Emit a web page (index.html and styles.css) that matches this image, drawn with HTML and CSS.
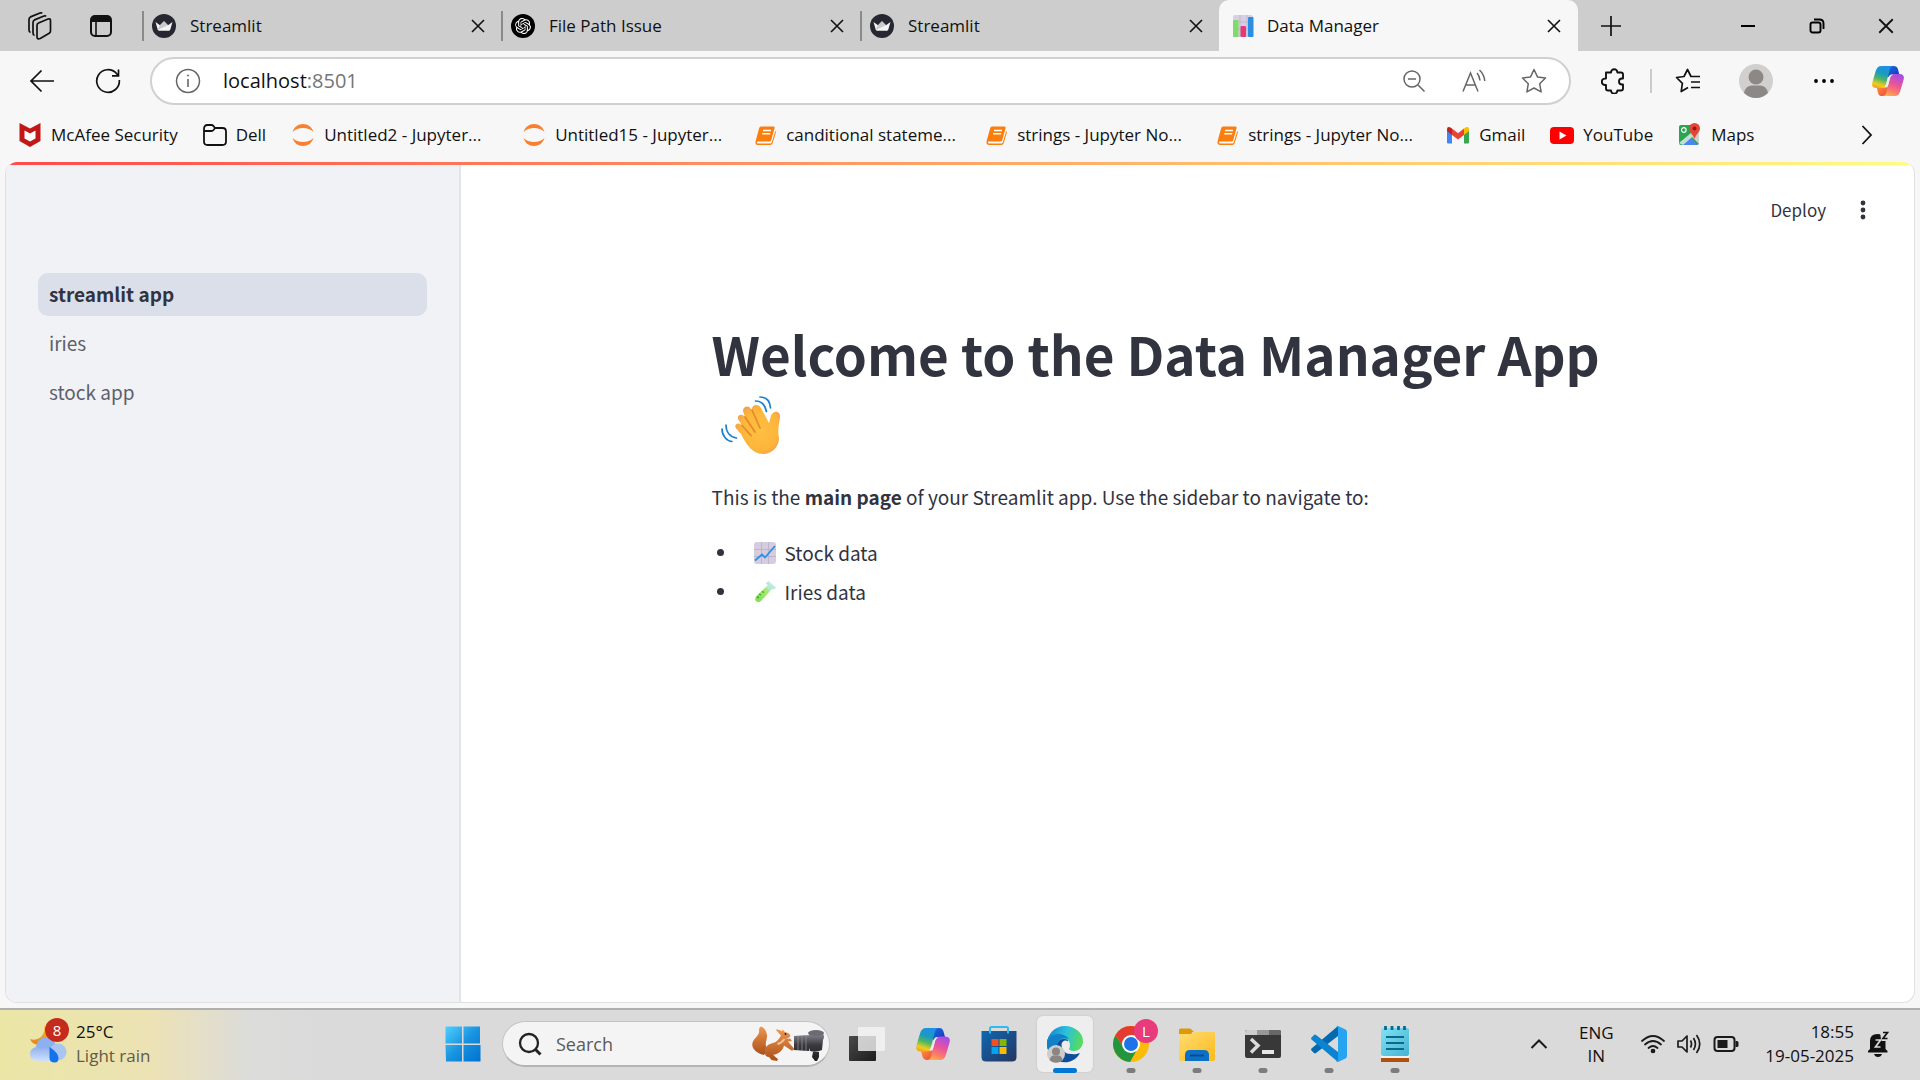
FILE: index.html
```html
<!DOCTYPE html>
<html lang="en">
<head>
<meta charset="utf-8">
<title>Data Manager</title>
<link rel="stylesheet" href="styles.css">
</head>
<body>
<svg class="defs" aria-hidden="true">
  <defs>
    <linearGradient id="cpA" x1="0.6" y1="0" x2="0.3" y2="1"><stop offset="0" stop-color="#1f8fe8"/><stop offset=".35" stop-color="#1a9bc0"/><stop offset=".6" stop-color="#4fb563"/><stop offset=".85" stop-color="#e9cf1f"/><stop offset="1" stop-color="#f7a51d"/></linearGradient>
    <linearGradient id="cpB" x1="0.7" y1="0" x2="0.3" y2="1"><stop offset="0" stop-color="#a74be8"/><stop offset=".45" stop-color="#e8559b"/><stop offset=".75" stop-color="#fb7a6a"/><stop offset="1" stop-color="#ffb04a"/></linearGradient>
    <linearGradient id="cpC" x1="0" y1="0" x2="1" y2="1"><stop offset="0" stop-color="#1a6fe6"/><stop offset="1" stop-color="#1636b8"/></linearGradient>
    <linearGradient id="cpD" x1="0" y1="0" x2="1" y2="1"><stop offset="0" stop-color="#ff9a3c"/><stop offset="1" stop-color="#e8403e"/></linearGradient>
    <linearGradient id="win" x1="0" y1="0" x2="1" y2="1"><stop offset="0" stop-color="#4fd0ff"/><stop offset=".5" stop-color="#1893e0"/><stop offset="1" stop-color="#0072d0"/></linearGradient>
    <linearGradient id="cloud" x1="0" y1="0" x2="0" y2="1"><stop offset="0" stop-color="#8fb2f0"/><stop offset="1" stop-color="#cfe0fb"/></linearGradient>
    <linearGradient id="moon" x1="0" y1="0" x2="0" y2="1"><stop offset="0" stop-color="#f7c42a"/><stop offset="1" stop-color="#ea7f1c"/></linearGradient>
    <linearGradient id="fur" x1="0" y1="0" x2="0" y2="1"><stop offset="0" stop-color="#f0964c"/><stop offset="1" stop-color="#a9501b"/></linearGradient>
    <linearGradient id="metal" x1="0" y1="0" x2="0" y2="1"><stop offset="0" stop-color="#85858e"/><stop offset=".4" stop-color="#3a3a40"/><stop offset="1" stop-color="#1d1d20"/></linearGradient>
    <linearGradient id="store" x1="0" y1="0" x2="1" y2="1"><stop offset="0" stop-color="#0e68b4"/><stop offset="1" stop-color="#27355e"/></linearGradient>
    <linearGradient id="edgeTop" x1="0" y1=".3" x2="1" y2=".5"><stop offset="0" stop-color="#1583d0"/><stop offset=".5" stop-color="#2cc0dc"/><stop offset="1" stop-color="#57dd58"/></linearGradient>
    <linearGradient id="folder" x1="0" y1="0" x2="1" y2="1"><stop offset="0" stop-color="#ffdc73"/><stop offset="1" stop-color="#fbbb1c"/></linearGradient>
    <linearGradient id="note" x1="0" y1="0" x2="1" y2="1"><stop offset="0" stop-color="#82e2f2"/><stop offset="1" stop-color="#45b3d3"/></linearGradient>
    <linearGradient id="dark" x1="0" y1="0" x2="1" y2="1"><stop offset="0" stop-color="#4a4a4a"/><stop offset="1" stop-color="#1c1c1c"/></linearGradient>
    <radialGradient id="hand" cx=".55" cy=".5" r=".6"><stop offset="0" stop-color="#ffc042"/><stop offset=".7" stop-color="#fdb53a"/><stop offset="1" stop-color="#f4975a"/></radialGradient>
    <linearGradient id="bulb" x1="1" y1="0" x2="0" y2="1"><stop offset="0" stop-color="#cfeaff"/><stop offset=".35" stop-color="#b6e8cf"/><stop offset=".45" stop-color="#a6ea70"/><stop offset="1" stop-color="#7ddc55"/></linearGradient>
  </defs>
  <symbol id="i-close" viewBox="0 0 16 16"><path d="M2 2l12 12M14 2L2 14" fill="none" stroke="#111" stroke-width="1.6"/></symbol>
  <symbol id="i-crown" viewBox="0 0 24 24"><circle cx="12" cy="12" r="12" fill="#262730"/><path d="M3.500 8l4.500 3.200L12 7.300l4 3.900L20.500 8l-2.200 7.600q-.4 1.200-1.600 1.200H7.300q-1.200 0-1.600-1.200z" fill="#f4f4f4"/><path d="M12 7.300l4 3.900-10.500 4.800L8 11.200z" fill="#c9c9cb"/></symbol>
  <symbol id="i-jupyter" viewBox="0 0 24 24"><path d="M1.500 9C3 4 7 1 12 1s9 3 10.500 8C20 6.200 16 5 12 5S4 6.200 1.500 9zM1.500 15C3 20 7 23 12 23s9-3 10.500-8C20 17.800 16 19 12 19s-8-1.200-10.500-4z" fill="#f98030"/></symbol>
  <symbol id="i-book" viewBox="0 0 24 24"><path d="M8 3.500h12.500q1.500 0 1.100 1.500l-3.300 12q-.4 1.500-2 1.500H4.200q-1 1.800.6 1.900h12.600q1 0 1.400-1.200L22.300 8q.9.700.5 1.700l-3.200 10.600q-.6 1.700-2.300 1.700H5.500q-3.700 0-2.900-3.800L6.200 5q.4-1.500 1.800-1.500z" fill="#fb7d0b"/><path d="M10 7.500h8M9.200 10.700h8" stroke="#fff" stroke-width="1.500"/></symbol>
  <symbol id="i-copilot" viewBox="0 0 36 36"><path d="M17 2h7q3.500 0 4.500 3.400L30 11h-7.500q-3 0-4 3L15 10z" fill="url(#cpC)"/><path d="M19 34h-7q-3.500 0-4.500-3.400L6 25h7.500q3 0 4-3L21 26z" fill="url(#cpD)"/><path d="M11 2h13q-3 0-4 3.500L15.700 22q-.9 3.500-4.500 3.500H6q-6 0-4.600-6L5 7.500Q6.500 2 11 2z" fill="url(#cpA)"/><path d="M25 34H12q3 0 4-3.500L20.300 14q.9-3.500 4.500-3.500H30q6 0 4.600 6L31 28.500q-1.500 5.500-6 5.500z" fill="url(#cpB)"/><path d="M20.500 11.500h3q-2.400.8-3.200 3L17.500 24.500h-3q.8-.8 1.200-2.500z" fill="#ececec"/></symbol>
</svg>

<div class="browser">
  <div class="tabstrip">
    <div class="tab-tools">
      <button class="tool" aria-label="Workspaces"><svg width="26" height="28" viewBox="0 0 26 28" fill="none" stroke="#111" stroke-width="1.700" stroke-linejoin="round"><path d="M11 13.500q0-1.800 1.500-2.500L22 7q2.500-.8 2.500 1.500v10.500q0 1.500-1.300 2.200l-9 5.300Q11 27.500 11 25zM8.500 23.500Q7 23 7 21V10.500q0-1.800 1.500-2.600L18 4q1.500-.5 2 .5M4.500 20.500Q3 20 3 18V7.500q0-1.800 1.500-2.600L14 1q1.500-.5 2 .5"/></svg></button>
      <button class="tool" aria-label="Tab actions"><svg width="24" height="24" viewBox="0 0 24 24"><rect x="2" y="2" width="20" height="20" rx="4" fill="none" stroke="#111" stroke-width="2"/><path d="M2 8V5q0-3 3-3h14q3 0 3 3v3z" fill="#111"/><path d="M7 8v14" stroke="#111" stroke-width="1.600"/></svg></button>
    </div>
    <div class="tab"><svg class="fav"><use href="#i-crown"/></svg><button class="tab-title">Streamlit</button><button class="x" aria-label="Close tab"><svg><use href="#i-close"/></svg></button></div>
    <div class="tab"><svg class="fav" viewBox="0 0 24 24"><circle cx="12" cy="12" r="12" fill="#000"/><path transform="translate(4 4) scale(.667)" fill="#fff" d="M22.282 9.821a5.985 5.985 0 0 0-.516-4.910 6.046 6.046 0 0 0-6.510-2.900A6.065 6.065 0 0 0 4.981 4.182a5.985 5.985 0 0 0-3.998 2.900 6.046 6.046 0 0 0 .743 7.097 5.980 5.980 0 0 0 .510 4.911 6.051 6.051 0 0 0 6.515 2.900A5.985 5.985 0 0 0 13.260 24a6.056 6.056 0 0 0 5.772-4.206 5.990 5.990 0 0 0 3.998-2.900 6.056 6.056 0 0 0-.748-7.073zM13.260 22.430a4.476 4.476 0 0 1-2.876-1.041l.142-.080 4.778-2.758a.795.795 0 0 0 .393-.681v-6.737l2.020 1.169a.071.071 0 0 1 .038.052v5.583a4.504 4.504 0 0 1-4.495 4.493zM3.600 18.304a4.471 4.471 0 0 1-.535-3.014l.142.085 4.783 2.758a.771.771 0 0 0 .781 0l5.843-3.368v2.332a.080.080 0 0 1-.033.062L9.740 19.950a4.499 4.499 0 0 1-6.140-1.646zM2.341 7.896a4.485 4.485 0 0 1 2.365-1.973V11.600a.766.766 0 0 0 .388.677l5.815 3.355-2.021 1.168a.076.076 0 0 1-.071 0l-4.830-2.786A4.504 4.504 0 0 1 2.341 7.872zm16.596 3.856l-5.833-3.388L15.119 7.200a.076.076 0 0 1 .071 0l4.830 2.791a4.494 4.494 0 0 1-.676 8.104v-5.677a.790.790 0 0 0-.407-.667zm2.011-3.023l-.142-.085-4.774-2.782a.776.776 0 0 0-.785 0L9.409 9.230V6.897a.066.066 0 0 1 .028-.061l4.830-2.787a4.499 4.499 0 0 1 6.680 4.660zM8.307 12.863l-2.020-1.164a.080.080 0 0 1-.038-.057V6.075a4.499 4.499 0 0 1 7.376-3.454l-.142.081L8.704 5.460a.795.795 0 0 0-.393.682zm1.097-2.366l2.602-1.500 2.607 1.500v3l-2.597 1.500-2.607-1.500z"/></svg><button class="tab-title">File Path Issue</button><button class="x" aria-label="Close tab"><svg><use href="#i-close"/></svg></button></div>
    <div class="tab"><svg class="fav"><use href="#i-crown"/></svg><button class="tab-title">Streamlit</button><button class="x" aria-label="Close tab"><svg><use href="#i-close"/></svg></button></div>
    <div class="tab active"><svg class="fav" viewBox="0 0 24 24"><rect x="2" y="1" width="20" height="22" rx="2" fill="#d8d0e2"/><path d="M2 8h20M2 15h20M9 1v22M16 1v22" stroke="#bdb4cb" stroke-width=".8"/><rect x="2" y="6" width="5.500" height="17" rx="1" fill="#7fdc6a"/><rect x="9.500" y="12" width="5.500" height="11" rx="1" fill="#e43a78"/><rect x="17" y="3" width="5.500" height="20" rx="1" fill="#2b8ee0"/></svg><button class="tab-title">Data Manager</button><button class="x" aria-label="Close tab"><svg><use href="#i-close"/></svg></button></div>
    <button class="newtab" aria-label="New tab"><svg width="22" height="22" viewBox="0 0 22 22"><path d="M11 1v20M1 11h20" stroke="#111" stroke-width="1.700"/></svg></button>
    <div class="winctl">
      <button aria-label="Minimize"><svg width="16" height="16" viewBox="0 0 16 16"><path d="M1 8h14" stroke="#000" stroke-width="2"/></svg></button>
      <button aria-label="Restore"><svg width="16" height="16" viewBox="0 0 16 16" fill="none" stroke="#000" stroke-width="1.900"><rect x="1.500" y="4.500" width="10" height="10" rx="2"/><path d="M5 1.500h5.500q4 0 4 4V11"/></svg></button>
      <button aria-label="Close window"><svg width="18" height="18"><use href="#i-close"/></svg></button>
    </div>
  </div>

  <div class="toolbar">
    <div class="nav-btns">
      <button aria-label="Back"><svg width="26" height="24" viewBox="0 0 26 24" fill="none" stroke="#111" stroke-width="1.700"><path d="M25 12H2M12.500 1.500L2 12l10.500 10.500"/></svg></button>
      <button aria-label="Refresh"><svg width="26" height="26" viewBox="0 0 26 26" fill="none" stroke="#111" stroke-width="1.700"><path d="M24.300 12A11.300 11.300 0 1 1 21.500 5.500L23 7.500M23.500 1.500v6.300H17"/></svg></button>
    </div>
    <form class="address">
      <button type="button" class="info" aria-label="Site information"><svg width="26" height="26" viewBox="0 0 26 26" fill="none" stroke="#666" stroke-width="1.500"><circle cx="13" cy="13" r="11.500"/><path d="M13 11v8" stroke-width="1.600"/><circle cx="13" cy="7.500" r=".7" fill="#666" stroke-width=".7"/></svg></button>
      <input class="url" type="text" value="localhost" aria-label="Address"><span class="port">:8501</span>
      <div class="address-actions">
        <button type="button" aria-label="Zoom"><svg width="24" height="24" viewBox="0 0 24 24" fill="none" stroke="#666" stroke-width="1.500"><circle cx="10" cy="10" r="8"/><path d="M6 10h8M16 16l6.500 6.500"/></svg></button>
        <button type="button" aria-label="Read aloud"><svg width="26" height="26" viewBox="0 0 26 26" fill="none" stroke="#666" stroke-width="1.500"><path d="M2 23.500L9.500 5l7.500 18.500M4.700 17h9.600M16 5q2.500 2.600 3 7.500M18.500 2q4.500 4.300 5.300 11"/></svg></button>
        <button type="button" aria-label="Add to favorites"><svg width="26" height="26" viewBox="0 0 26 26" fill="none" stroke="#666" stroke-width="1.500" stroke-linejoin="round"><path d="M13 1.500l3.500 7.400 8 1.100-5.800 5.700 1.400 8.200L13 20l-7.100 3.900 1.400-8.200L1.500 10l8-1.100z"/></svg></button>
      </div>
    </form>
    <div class="tb-actions">
      <button aria-label="Extensions"><svg width="26" height="26" viewBox="0 0 26 26" fill="none" stroke="#111" stroke-width="1.900" stroke-linejoin="round"><path d="M5 4.500h5a3.200 3.200 0 0 1 6.400 0H20q2 0 2 2v4h-1a3 3 0 0 0 0 6h1v4q0 2-2 2h-3.600a3.200 3.200 0 0 1-6.400 0H7q-2 0-2-2V17H4a3.200 3.200 0 0 1 0-6.400h1z"/></svg></button>
      <span class="sep"></span>
      <button aria-label="Favorites"><svg width="26" height="26" viewBox="0 0 26 26" fill="none" stroke="#111" stroke-width="1.700" stroke-linejoin="round"><path d="M13 19.500l-6.800 4 1.200-8.200L1.500 9.500l7.500-1 3.500-7 3.500 7H25M16 14h9M16 19.500h9"/></svg></button>
      <button aria-label="Profile"><svg width="34" height="34" viewBox="0 0 34 34"><circle cx="17" cy="17" r="17" fill="#d2d0ce"/><circle cx="17" cy="13" r="7.500" fill="#8c8886"/><path d="M5 29q1.500-7.500 8-7.500h8q6.500 0 8 7.500a17 17 0 0 1-24 0z" fill="#8c8886"/></svg></button>
      <button aria-label="More"><svg width="22" height="6" viewBox="0 0 22 6"><circle cx="3" cy="3" r="1.900"/><circle cx="11" cy="3" r="1.900"/><circle cx="19" cy="3" r="1.900"/></svg></button>
      <button aria-label="Copilot"><svg width="34" height="34"><use href="#i-copilot"/></svg></button>
    </div>
  </div>

  <nav class="bookmarks" aria-label="Favorites bar">
    <a href="#"><svg viewBox="0 0 24 24"><path d="M1.500 0L12 5.500 22.500 0v18L12 24 1.500 18z" fill="#c01818"/><path d="M6.500 7.500L12 10.500l5.500-3v8L12 18.500l-5.500-3z" fill="#fff"/></svg>McAfee Security</a>
    <a href="#"><svg viewBox="0 0 24 24" fill="none" stroke="#111" stroke-width="1.800"><path d="M1 6q0-4 3.500-4h4q1 0 2 1l1.500 2h7.500q3.500 0 3.500 3.500v10q0 3.500-3.500 3.500h-15Q1 22 1 18.500zM1.500 8h7q1.200 0 2-1L12 5"/></svg>Dell</a>
    <a href="#" class="long"><svg><use href="#i-jupyter"/></svg>Untitled2 - Jupyter...</a>
    <a href="#" class="long"><svg><use href="#i-jupyter"/></svg>Untitled15 - Jupyter...</a>
    <a href="#" class="long"><svg><use href="#i-book"/></svg>canditional stateme...</a>
    <a href="#" class="long"><svg><use href="#i-book"/></svg>strings - Jupyter No...</a>
    <a href="#" class="long"><svg><use href="#i-book"/></svg>strings - Jupyter No...</a>
    <a href="#"><svg viewBox="0 0 24 24"><path d="M1 6v13.500q0 1 1 1h4V9z" fill="#4285f4"/><path d="M23 6v13.500q0 1-1 1h-4V9z" fill="#34a853"/><path d="M18 5.500l2-1.300q3-1 3 2V8l-5 4z" fill="#fbbc04"/><path d="M6 5.500L4 4.200q-3-1-3 2V8l5 4z" fill="#c5221f"/><path d="M6 5.500l6 4.700 6-4.700V12l-6 4.500L6 12z" fill="#ea4335"/></svg>Gmail</a>
    <a href="#"><svg viewBox="0 0 24 24"><rect y="4" width="24" height="17" rx="4" fill="#f00"/><path d="M9.500 8.500v8l7-4z" fill="#fff"/></svg>YouTube</a>
    <a href="#"><svg viewBox="0 0 24 24"><rect x="1" y="2" width="20" height="20" rx="2" fill="#2aa551"/><path d="M4 22l8-8 8 8z" fill="#4a86f0"/><path d="M1 20L19 5l2 3L5 22z" fill="#f5f5f5" opacity=".75"/><path d="M12 12l9 9V8z" fill="#cfcfcf"/><circle cx="5.800" cy="7" r="2.300" fill="none" stroke="#fff" stroke-width="1.200"/><path d="M16.500 0a5.500 5.500 0 0 1 5.500 5.500c0 3.500-4 5.500-5.500 10.500C15 11 11 9 11 5.500A5.500 5.500 0 0 1 16.500 0z" fill="#e94335"/><circle cx="16.500" cy="5.500" r="1.900" fill="#8a1c14"/></svg>Maps</a>
    <button class="more" aria-label="More favorites"><svg width="12" height="20" viewBox="0 0 12 20"><path d="M1.500 1L10 10l-8.500 9" fill="none" stroke="#111" stroke-width="1.800"/></svg></button>
  </nav>

  <div class="viewport">
    <div class="decoration"></div>
    <div class="app">
      <nav class="sidebar" aria-label="Pages">
        <a href="#" class="current">streamlit app</a>
        <a href="#">iries</a>
        <a href="#">stock app</a>
      </nav>
      <main>
        <header>
          <button class="deploy">Deploy</button>
          <button aria-label="Main menu"><svg width="6" height="20" viewBox="0 0 6 20" fill="#31333f"><circle cx="3" cy="3" r="2.400"/><circle cx="3" cy="10" r="2.400"/><circle cx="3" cy="17" r="2.400"/></svg></button>
        </header>
        <article>
          <h1>Welcome to the Data Manager App
            <svg class="wave" role="img" aria-label="waving hand" viewBox="0 0 76 60">
              <path d="M29 38C24 32 22 31 24 28.500c2-2 4-1 6 1L26 23c-1-4 4-6 7-2l-2-6c0-5 6-6 8-2l1 1c-1-5 6-7 9-2l8 15 2-7c2-6 9-5 9 0 0 6-3 12-1 22 0 9-7 16-16 16-11 0-17-10-22-20z" fill="url(#hand)"/>
              <path d="M30 29.500l9 10M33 21l10 15M40 14l8 18" stroke="#e58a2c" stroke-width="1.800" fill="none" stroke-linecap="round"/>
              <g fill="none" stroke="#1a82cf" stroke-width="1.700" stroke-linecap="round"><path d="M48 1c6 0 10 4 10.500 11M43.500 5c6 0 9.500 4 11 10.500M10 33c0 7 5 12 10 12.500M14 29c0 7 4 12 10.500 13"/></g>
            </svg>
          </h1>
          <p>This is the <strong>main page</strong> of your Streamlit app. Use the sidebar to navigate to:</p>
          <ul>
            <li><svg viewBox="0 0 22 22" aria-hidden="true"><rect width="22" height="22" rx="3" fill="#d5cce0"/><path d="M0 7.500h22M0 14.500h22M7.500 0v22M14.500 0v22" stroke="#b9aecb" stroke-width=".8"/><path d="M1 18.500l7-6 3 3L21 4" fill="none" stroke="#2f8fe0" stroke-width="1.800"/></svg>Stock data</li>
            <li><svg viewBox="0 0 22 22" aria-hidden="true"><path d="M11.500 2.500l3-2.500 7.500 6.500-1.500 2-2.500-.5L7 20q-2 2-4.500.500T2 15.500L14 4z" fill="url(#bulb)"/><path d="M5 13l2 1M8 10.500l2 1M3 16l2 .5" stroke="#3b9a40" stroke-width="1.300"/></svg>Iries data</li>
          </ul>
        </article>
      </main>
    </div>
  </div>
</div>

<footer class="taskbar">
  <button class="weather">
    <span class="weather-icon">
      <svg width="40" height="40" viewBox="0 0 40 40"><path d="M16 2c2 8-5 16-14 13 3 8 15 7 19-1 2-5 0-10-5-12z" fill="url(#moon)"/><circle cx="18" cy="23" r="10" fill="#8db0ee"/><circle cx="30" cy="28" r="8.500" fill="#a9c5f4"/><path d="M9 37q-7-1-7-7t7-7q3 0 5 2 4-3 8 0t4 7-3 5z" fill="url(#cloud)"/><path d="M21.500 23q9 6 9 11t-4.500 4.500-4.500-4.500z" fill="#1273ee"/></svg>
      <span class="badge">8</span>
    </span>
    <span class="weather-text"><span>25°C</span><span class="dim">Light rain</span></span>
  </button>
  <div class="dock">
    <button aria-label="Start"><svg width="36" height="36" viewBox="0 0 36 36"><path d="M1 .500h16v17H.500V1zM18.500.500H35V17.500H18.500zM.500 19H17v16.500H1zM18.500 19h17v16.500h-17z" fill="url(#win)"/></svg></button>
    <label class="search">
      <svg width="24" height="24" viewBox="0 0 24 24" fill="none" stroke="#222" stroke-width="2.300"><circle cx="11" cy="11" r="9"/><path d="M17.500 17.500l5 5" stroke-width="3"/></svg>
      <input type="text" placeholder="Search" aria-label="Search">
      <svg class="squirrel" width="74" height="36" viewBox="0 0 74 36"><path d="M13 29C3 27-1 20 2.500 14.500 5 11 9 8 8 4q0-3 2-3.500 5 2 6 8.500c.5 4-2 7-1 11 .6 3 1.500 5-2 9z" fill="url(#fur)"/><path d="M14 27c-1-6 3-9 8-10 4-1 6-4 8-7.500L24.500 3.500q4-.5 6.500 2l.5-2 2.500 2.500q5 1 5.500 4-1.500 2.500-5.500 3l5-.5 2 2.500-4 .5 6 7q0 2.500-2.500 2L33 19.500q-1 5-6.500 8-2.500 1.500-4.500 1l3 3 2 1.500-1 2-5.500-1-2.500-3q-4 0-4-4z" fill="url(#fur)"/><path d="M26.500 18q4-1 7-5" stroke="#f7c79a" stroke-width="2" fill="none"/><circle cx="34.500" cy="8" r="1" fill="#222"/><path d="M43 10l15-1v16l-15-1zM58 8h14q2 2 0 6l-1 10q-6 3-12 1l-1-3zM62 26h6v5l-2 4h-2l-3-4z" fill="url(#metal)"/><ellipse cx="65" cy="7" rx="8" ry="3" fill="#6b6b74"/><path d="M47 10v14M51 10v14M55 10v15" stroke="#8e8e96" stroke-width=".8"/></svg>
    </label>
    <button aria-label="Task view"><svg width="36" height="36" viewBox="0 0 36 36"><rect x="0" y="10" width="27" height="25" rx="1" fill="url(#dark)"/><rect x="9" y="1" width="27" height="24" rx="1" fill="#f4f4f4" opacity=".8"/></svg></button>
    <button aria-label="Copilot"><svg width="36" height="36"><use href="#i-copilot"/></svg></button>
    <button aria-label="Microsoft Store"><svg width="36" height="36" viewBox="0 0 36 36"><path d="M9 7V2.500Q9 1 10.500 1h15Q27 1 27 2.500V7" fill="none" stroke="#30b9f2" stroke-width="2"/><path d="M.500 5h35v26q0 4.500-4.500 4.500H5Q.500 35.500.500 31z" fill="url(#store)"/><path d="M9 5v2.500M27 5v2.500" stroke="#30b9f2" stroke-width="2"/><path d="M10.500 13h7v7h-7z" fill="#f25022"/><path d="M18.500 13h7v7h-7z" fill="#7fba00"/><path d="M10.500 21h7v7h-7z" fill="#00a4ef"/><path d="M18.500 21h7v7h-7z" fill="#ffb900"/></svg></button>
    <button class="app-btn selected" aria-label="Edge"><svg width="38" height="38" viewBox="0 0 38 38"><path d="M1 19Q1 8 11 9c9 0 14 6 9 11-3 6 4 12 14 8-5 9-14 11-22 8Q1 30 1 19z" fill="#0e4f9c"/><path d="M1 19C1 9 9 1 19 1s18 7 18 15c0 6-4 10-9 10-4 0-6-2-5-4 2-4 0-8-5-8-6 0-8 6-7 11-6-1-10 1-10-6z" fill="url(#edgeTop)"/><path d="M1 19q2-10 11-10 7 0 11 5-9-3-12 5-2 6 1 12-11-1-11-12z" fill="#1180c6"/><path d="M15.500 19q1-3.500 4-3.500t4 3.500-.5 5 4.500 3.200q-3 2.500-7 1-5-2.200-5-9.200z" fill="#ededed"/><circle cx="10" cy="29" r="9" fill="#cfcdcb"/><circle cx="10" cy="26.500" r="4" fill="#8a8684"/><path d="M3.500 35q1-4.500 4-4.500h5q3 0 4 4.500a9 9 0 0 1-13 0z" fill="#8a8684"/></svg></button>
    <button class="app-btn running" aria-label="Chrome"><svg width="38" height="38" viewBox="0 0 38 38"><circle cx="19" cy="19" r="18" fill="#fbbc09"/><path d="M3.400 10A18 18 0 0 0 18 37l8-14-7-4-7 4z" fill="#24953f"/><path d="M3.400 10A18 18 0 0 1 34.600 10H19l-7 13z" fill="#e53a30"/><circle cx="19" cy="19" r="9" fill="#fff"/><circle cx="19" cy="19" r="7" fill="#1f73e8"/></svg><span class="badge chrome-badge">L</span></button>
    <button class="app-btn running" aria-label="File Explorer"><svg width="38" height="38" viewBox="0 0 38 38"><path d="M1 12V5q0-1.500 1.500-1.500h9q1 0 2 1L16 7h-2l-1 5z" fill="#dc9a05"/><path d="M1 9h12l3-2h19.500q1.500 0 1.500 1.500V34q0 2-2 2H3q-2 0-2-2z" fill="url(#folder)"/><path d="M7 36v-6q0-5 5-5h14q5 0 5 5v6z" fill="#0c71c6"/><path d="M12 30.500h14" stroke="#064a8c" stroke-width="1.800"/></svg></button>
    <button class="app-btn running" aria-label="Terminal"><svg width="38" height="38" viewBox="0 0 38 38"><rect x="1" y="5" width="36" height="28" rx="2" fill="#383838"/><path d="M1 10V7q0-2 2-2h10v5z" fill="#ccc"/><path d="M13 5h12v5H13z" fill="#989898"/><path d="M25 5h10q2 0 2 2v3H25z" fill="#686868"/><path d="M7 14l7 6.500-7 7" fill="none" stroke="#dcdcdc" stroke-width="3.500"/><path d="M18 25h12v4H18z" fill="#e6e6e6"/></svg></button>
    <button class="app-btn running" aria-label="Visual Studio Code"><svg width="38" height="38" viewBox="0 0 38 38"><path d="M28 1v10L6 28q-1 .8-2 0l-2.500-2.500q-1-1 0-2z" fill="#0569b0"/><path d="M28 37V27L6 10q-1-.8-2 0l-2.500 2.500q-1 1 0 2z" fill="#0a84d0"/><path d="M28 1l7.500 3.500Q37 5.300 37 7v24q0 1.700-1.500 2.500L28 37q-1 .3-2-.8 2 .3 2-1.700v-31Q28 1.500 26 1.800q1-1.100 2-.8z" fill="#26a4f2"/></svg></button>
    <button class="app-btn running" aria-label="Notepad"><svg width="38" height="38" viewBox="0 0 38 38"><path d="M5 30h28v7H5z" fill="#b0500e"/><path d="M5 28h28v5H5z" fill="#f2f2f2"/><rect x="5" y="3" width="28" height="28" rx="2" fill="url(#note)"/><path d="M10 12h18M10 18h18M10 24h18" stroke="#0a6a8e" stroke-width="1.900"/><path d="M9.500 1v4M16 1v4M22.500 1v4M28.500 1v4" stroke="#0a6a8e" stroke-width="2.800"/></svg></button>
  </div>
  <div class="tray">
    <button aria-label="Hidden icons"><svg width="18" height="10" viewBox="0 0 18 10"><path d="M1.500 9L9 1.500 16.500 9" fill="none" stroke="#1a1a1a" stroke-width="2"/></svg></button>
    <button class="lang"><span>ENG</span><span>IN</span></button>
    <button class="status" aria-label="Network, sound and battery">
      <svg width="24" height="24" viewBox="0 0 24 24" fill="none" stroke="#1a1a1a" stroke-width="1.700" stroke-linecap="round"><path d="M1 9q11-10 22 0M4 12.500q8-7 16 0M7.500 16q4.500-4 9 0"/><circle cx="12" cy="19" r="1.500" fill="#1a1a1a"/></svg>
      <svg width="26" height="24" viewBox="0 0 26 24" fill="none" stroke="#1a1a1a" stroke-width="1.700" stroke-linejoin="round"><path d="M2 9h4l5-5v16l-5-5H2zM14.500 8.500q2 3.500 0 7M17.500 6q3.800 6 0 12M20.500 3q6.500 9 0 18"/></svg>
      <svg width="26" height="24" viewBox="0 0 26 24"><rect x="1.500" y="5" width="20" height="14" rx="3" fill="none" stroke="#1a1a1a" stroke-width="2"/><rect x="4.500" y="8" width="10" height="8" fill="#1a1a1a"/><path d="M22.500 9h1.500q1.500 0 1.500 1.500v3q0 1.500-1.500 1.500h-1.500z" fill="#1a1a1a"/></svg>
    </button>
    <button class="clock"><span>18:55</span><span>19-05-2025</span></button>
    <button aria-label="Notifications"><svg width="22" height="26" viewBox="0 0 22 26"><path d="M3 18v-8q0-7 7.500-7 2.500 0 4 1v6h4v8l2 2v1.500H1V20zM7 23h8q-1 3-4 3t-4-3z" fill="#111"/><path d="M8.500 9h5l-5 7h5" fill="none" stroke="#dadada" stroke-width="1.700"/><path d="M13 0h9v9h-8z" fill="#dadada"/><path d="M16 1.500h4.500l-4.500 6h4.500" fill="none" stroke="#111" stroke-width="1.700"/></svg></button>
  </div>
</footer>
</body>
</html>
```
FILE: styles.css
```css
* { box-sizing: border-box; }
body {
  margin: 0;
  min-height: 100vh;
  display: flex;
  flex-direction: column;
  background: #f7f7f7;
  color: #111;
  font: 17px/24px "Open Sans", "Noto Sans", sans-serif;
}
button {
  border: 0;
  padding: 0;
  background: none;
  color: inherit;
  font: inherit;
  display: flex;
  align-items: center;
  justify-content: center;
}
input { border: 0; padding: 0; background: none; outline: 0; font: inherit; color: inherit; }
a { color: inherit; text-decoration: none; }
svg { flex: none; display: block; }
.defs { position: absolute; width: 0; height: 0; }

.browser { flex: 1; display: flex; flex-direction: column; }

/* Tabs */
.tabstrip { display: flex; height: 51px; background: #cdcdcd; }
.tab-tools { display: flex; flex: none; width: 142px; padding-left: 8px; }
.tool { width: 62px; }
.tab {
  flex: 0 1 359px;
  display: flex;
  align-items: center;
  gap: 14px;
  padding: 0 15px 0 8px;
  min-width: 0;
  border-left: 2px solid #8a8a8a;
  border-image: linear-gradient(transparent 11px, #8a8a8a 11px, #8a8a8a 41px, transparent 41px) 0 0 0 2;
}
.fav { width: 24px; height: 24px; }
.tab-title { flex: 1; justify-content: flex-start; height: 100%; }
.x { width: 16px; height: 30px; }
.x svg { width: 16px; height: 16px; }
.tab.active {
  background: #f7f7f7;
  border: 0;
  border-radius: 10px 10px 0 0;
  padding-left: 12px;
  padding-right: 16px;
  gap: 12px;
}
.newtab { width: 66px; }
.winctl { display: flex; margin-left: auto; }
.winctl button { width: 69px; }

/* Toolbar */
.toolbar { display: flex; align-items: center; height: 60px; }
.nav-btns { display: flex; padding-left: 9px; width: 150px; }
.nav-btns button { width: 66px; height: 48px; }
.address {
  flex: 1;
  display: flex;
  align-items: center;
  height: 48px;
  margin-right: 9px;
  padding: 0 5px;
  border: 2px solid #d0d0d0;
  border-radius: 24px;
  background: #fff;
  font-size: 20px;
}
.info { width: 62px; margin-right: 4px; }
.url { field-sizing: content; }
.port { color: #767676; }
.address-actions { display: flex; margin-left: auto; }
.address-actions button { width: 60px; height: 44px; }
.tb-actions { display: flex; align-items: center; padding-right: 2px; }
.tb-actions button { width: 68px; height: 48px; }
.tb-actions button:last-child { width: 60px; }
.sep { width: 2px; height: 24px; margin: 0 2px; background: #cbcbcb; }

/* Favorites bar */
.bookmarks { display: flex; align-items: center; gap: 25px; height: 51px; padding: 0 47px 4px 18px; }
.bookmarks a { display: flex; align-items: center; gap: 9px; white-space: nowrap; }
.bookmarks a svg { width: 24px; height: 24px; }
.bookmarks .long { width: 206px; }
.more { margin-left: auto; }

/* Page */
.viewport {
  flex: 1;
  display: flex;
  flex-direction: column;
  margin: 0 5px 5px;
  border: 1px solid #e0e0e0;
  border-top: 0;
  border-radius: 12px;
  overflow: hidden;
  background: #fff;
  color: #31333f;
  font-family: "Noto Sans CJK SC", "Noto Sans", sans-serif;
  font-size: 19px;
}
.decoration { height: 3px; background: linear-gradient(90deg, #ff4b4b, #fffd80); }
.app { flex: 1; display: flex; }
.sidebar {
  width: 455px;
  display: flex;
  flex-direction: column;
  gap: 6px;
  padding: 108px 32px 0;
  background: #f0f2f6;
  border-right: 2px solid #e2e4e8;
}
.sidebar a { height: 43px; line-height: 42px; padding: 0 11px; border-radius: 10px; color: #5d606b; }
.sidebar .current { background: #dadfea; color: #31333f; font-weight: 700; }
main { flex: 1; display: flex; flex-direction: column; }
main header { display: flex; justify-content: flex-end; gap: 34px; padding: 33px 48px 0; font-size: 17px; }
article { width: 100%; max-width: 952px; margin: 0 auto; padding-top: 96px; }
h1 { margin: 0; font-size: 53px; line-height: 70px; font-weight: 700; }
.wave { width: 76px; height: 60px; margin: 8px 0 7px; }
p { margin: 25px 0 20px; line-height: 32px; }
ul { margin: 0; padding: 0 0 0 5px; list-style: none; }
li { display: flex; align-items: center; line-height: 39px; }
li::before { content: ""; width: 7px; height: 7px; margin-right: 30px; border-radius: 4px; background: #31333f; }
li svg { width: 22px; height: 22px; margin-right: 9px; }

/* Taskbar */
.taskbar {
  display: flex;
  align-items: center;
  height: 72px;
  padding-bottom: 2px;
  border-top: 2px solid #b0b0b0;
  background: linear-gradient(90deg, #ebe6a6 0, #ece2b4 150px, #dcdcda 250px, #dadada 320px);
}
.weather { width: 430px; height: 100%; padding-left: 28px; justify-content: flex-start; gap: 8px; }
.weather-icon { position: relative; }
.weather-text { display: flex; flex-direction: column; align-items: flex-start; }
.dim { color: #5f5c45; }
.badge {
  position: absolute;
  top: -6px;
  right: -1px;
  width: 24px;
  height: 24px;
  border-radius: 12px;
  background: #c42b1c;
  color: #fff;
  font-size: 15px;
  text-align: center;
}
.dock { display: flex; align-items: center; }
.dock button { width: 66px; height: 66px; }
.search {
  display: flex;
  align-items: center;
  gap: 14px;
  width: 328px;
  height: 46px;
  margin: 0 4px 0 6px;
  padding: 0 4px 0 15px;
  border: 1px solid #c4c4c4;
  border-bottom: 2px solid #b4b4b4;
  border-radius: 23px;
  background: #f4f4f4;
  font-size: 18px;
}
.search input { flex: 1; min-width: 0; }
.search input::placeholder { color: #5a5a5a; opacity: 1; }
.dock .app-btn {
  position: relative;
  width: 56px;
  height: 56px;
  margin: 0 5px;
  border-radius: 6px;
}
.dock .selected { background: #eee; box-shadow: 0 0 1px 1px #d0d0d0; }
.app-btn::after {
  content: "";
  position: absolute;
  bottom: -1px;
  left: 50%;
  transform: translateX(-50%);
  width: 9px;
  height: 5px;
  border-radius: 3px;
  background: #7c7c7c;
}
.selected::after { width: 24px; background: #0078d4; }
.chrome-badge { top: 3px; right: 1px; background: #e93a7b; }
.tray { display: flex; align-items: center; margin-left: auto; padding-right: 31px; }
.lang { flex-direction: column; width: 54px; margin: 0 18px 0 21px; line-height: 23px; }
.status { gap: 11px; margin-right: 26px; }
.clock { flex-direction: column; align-items: flex-end; margin-right: 13px; }
```
